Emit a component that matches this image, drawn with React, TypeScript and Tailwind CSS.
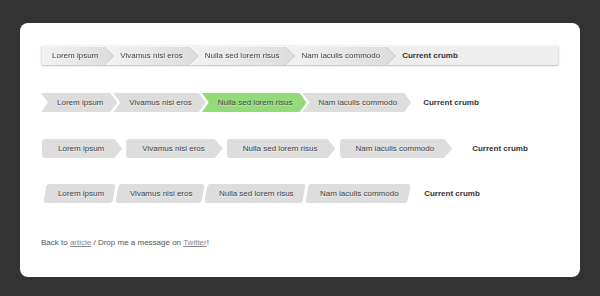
const crumbs = ["Lorem ipsum", "Vivamus nisi eros", "Nulla sed lorem risus", "Nam iaculis commodo"];
const stack = ["z-50", "z-40", "z-30", "z-20", "z-10"];

function BreadcrumbsOne() {
  return (
    <ul className="flex h-[20px] overflow-hidden rounded-[3px] border border-[#e5e5e5] border-t-[#f5f5f5] border-b-[#ccc] bg-[#eee] shadow-[0_0_2px_rgba(0,0,0,0.2)]">
      {crumbs.map((c, i) => (
        <li key={c} className={`${stack[i]} flex ${i ? "-ml-[10px]" : ""} drop-shadow-[1px_0_0_#c6c6c6]`}>
          <a
            href="#"
            className={`flex h-full items-center bg-linear-to-r from-[#f3f3f3] to-[#dcdcdc] pr-[15px] text-[#444] [clip-path:polygon(0_0,calc(100%_-_10px)_0,100%_50%,calc(100%_-_10px)_100%,0_100%)] ${
              i ? "pl-[17px]" : "pl-[10px]"
            }`}
          >
            {c}
          </a>
        </li>
      ))}
      <li className="-ml-[10px] flex items-center pl-[17px] font-bold text-[#333]">Current crumb</li>
    </ul>
  );
}

function BreadcrumbsTwo() {
  return (
    <ul className="flex h-[19px]">
      {crumbs.map((c, i) => (
        <li key={c} className={`flex ${i ? "-ml-[4px]" : ""}`}>
          <a
            href="#"
            className={`flex items-center pl-[16px] pr-[14px] text-[#444] [clip-path:polygon(0_0,calc(100%_-_7px)_0,100%_50%,calc(100%_-_7px)_100%,0_100%,7px_50%)] ${
              i === 2 ? "bg-[#93da78]" : "bg-[#ddd]"
            }`}
          >
            {c}
          </a>
        </li>
      ))}
      <li className="-ml-[4px] flex items-center pl-[16px] font-bold text-[#333]">Current crumb</li>
    </ul>
  );
}

function BreadcrumbsThree() {
  return (
    <ul className="ml-[1px] flex h-[19px] gap-[4px]">
      {crumbs.map((c) => (
        <li key={c} className="flex">
          <a
            href="#"
            className="flex items-center rounded-l-[3px] bg-[#ddd] pl-[16px] pr-[18px] text-[#444] [clip-path:polygon(0_0,calc(100%_-_8px)_0,100%_50%,calc(100%_-_8px)_100%,0_100%)]"
          >
            {c}
          </a>
        </li>
      ))}
      <li className="flex items-center pl-[16px] font-bold text-[#333]">Current crumb</li>
    </ul>
  );
}

function BreadcrumbsFour() {
  return (
    <ul className="ml-[4px] flex h-[19px] gap-[3px]">
      {crumbs.map((c) => (
        <li key={c} className="flex">
          <a href="#" className="flex skew-x-[-10deg] items-center rounded-[3px] bg-[#ddd] pl-[13px] pr-[10px] text-[#444]">
            <span className="inline-block skew-x-[10deg]">{c}</span>
          </a>
        </li>
      ))}
      <li className="flex items-center pl-[13px] font-bold text-[#333]">Current crumb</li>
    </ul>
  );
}

export default function App() {
  return (
    <div className="min-h-screen bg-[#333] px-[20px] pt-[23px] font-['Liberation_Sans',Arial,sans-serif] text-[8px] [text-shadow:0_1px_0_rgba(255,255,255,0.5)]">
      <div className="h-[254px] rounded-[8px] bg-white px-[21px] pt-[23px]">
        <BreadcrumbsOne />
        <div className="mt-[27px]">
          <BreadcrumbsTwo />
        </div>
        <div className="mt-[27px]">
          <BreadcrumbsThree />
        </div>
        <div className="mt-[26px]">
          <BreadcrumbsFour />
        </div>
        <p className="mt-[34px] leading-[12px] text-[#555]">
          Back to <a href="#" className="text-[#888] underline">article</a> / Drop me a message on{" "}
          <a href="#" className="text-[#888] underline">Twitter</a>!
        </p>
      </div>
    </div>
  );
}
